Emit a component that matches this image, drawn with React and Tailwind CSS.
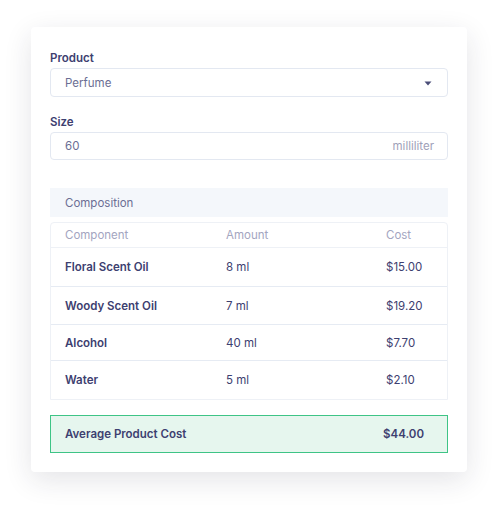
const rows = [
    {name: "Floral Scent Oil", amount: "8 ml", cost: "$15.00", h: "h-[39px]"},
    {name: "Woody Scent Oil", amount: "7 ml", cost: "$19.20", h: "h-[38px]"},
    {name: "Alcohol", amount: "40 ml", cost: "$7.70", h: "h-[36px]"},
    {name: "Water", amount: "5 ml", cost: "$2.10", h: "h-[38px]"},
];

export default function App() {
    return (
        <div className="w-[498px] h-[506px] bg-white pt-[27px] pl-[31px] font-['Inter',sans-serif] text-[11.5px]">
            <div className="w-[436px] h-[445px] bg-white rounded-[4px] shadow-[0_8px_28px_rgba(30,35,60,0.12)] px-[19px] pt-[22px]">
                {/* product select */}
                <div className="h-[16px] font-semibold text-[#3d4070] leading-[18px]">Product</div>
                <div className="mt-[3px] h-[29px] border border-[#e3e8f1] rounded-[4px] flex items-center justify-between pl-[14px] pr-[14px] pt-[2px]">
                    <span className="text-[#6b6e94]">Perfume</span>
                    <svg width="8" height="5" viewBox="0 0 8 5" className="mr-[1px]">
                        <path d="M0.5 0.5 L7.5 0.5 L4 4.5 Z" fill="#4a4d78"/>
                    </svg>
                </div>

                {/* size */}
                <div className="mt-[16px] h-[16px] font-semibold text-[#3d4070] leading-[18px]">Size</div>
                <div className="mt-[3px] h-[28px] border border-[#e3e8f1] rounded-[4px] flex items-center justify-between pl-[14px] pr-[13px] pt-[2px]">
                    <span className="text-[#6b6e94]">60</span>
                    <span className="text-[#9fa1b9]">milliliter</span>
                </div>

                {/* composition */}
                <div className="mt-[28px] h-[29px] bg-[#f4f7fb] flex items-center pl-[15px] pt-[2px] text-[#6b6e94]">
                    Composition
                </div>
                <div className="mt-[5px] border border-[#eef1f6] rounded-t-[4px]">
                    <div className="h-[25px] flex items-center pl-[14px] pt-[2px] text-[#a3a5bf] border-b border-[#eef1f6]">
                        <div className="w-[161px]">Component</div>
                        <div className="w-[160px]">Amount</div>
                        <div>Cost</div>
                    </div>
                    {rows.map((r, i) => (
                        <div key={i}
                             className={r.h + " flex items-center pl-[14px] pt-[2px] text-[#3d4070] " + (i < rows.length - 1 ? "border-b border-[#e6ebf3]" : "")}>
                            <div className="w-[161px] font-semibold">{r.name}</div>
                            <div className="w-[160px]">{r.amount}</div>
                            <div>{r.cost}</div>
                        </div>
                    ))}
                </div>

                {/* total */}
                <div className="mt-[15px] h-[38px] bg-[#e6f6ee] border border-[#3ec486] flex items-center justify-between pl-[14px] pr-[23px] pt-[1px] font-semibold text-[#3d4070]">
                    <span>Average Product Cost</span>
                    <span>$44.00</span>
                </div>
            </div>
        </div>
    );
}
